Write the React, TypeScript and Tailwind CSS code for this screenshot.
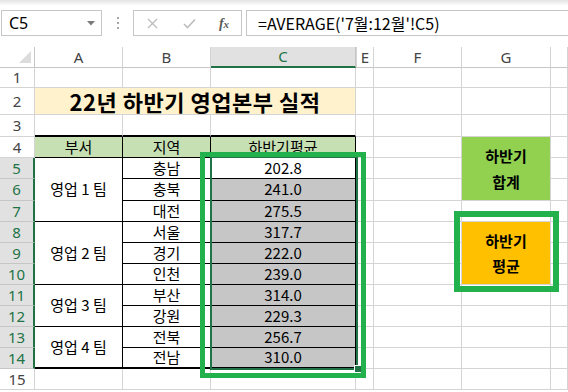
import React from 'react';

const KR = { fontFamily: '"Noto Sans CJK KR", "Noto Sans", sans-serif' };

// plain sheet cell with light gridlines
const Cell = ({ cls = '', children }: { cls?: string; children?: React.ReactNode }) => (
  <div className={`flex items-center justify-center border-r border-b border-[#d4d4d4] ${cls}`}>{children}</div>
);

// black-bordered table cell
const TCell = ({ cls = '', children }: { cls?: string; children?: React.ReactNode }) => (
  <div className={`flex items-center justify-center border-r border-b border-black text-[15px] text-black ${cls}`}>
    {children}
  </div>
);

const RowHead = ({ n, selected = false }: { n: number; selected?: boolean }) =>
  selected ? (
    <div className="flex items-center justify-center border-b border-b-[#c6c6c6] border-r-2 border-r-[#217346] bg-[#e1e1e1] text-[15px] text-[#217346] font-['Noto_Sans']">
      {n}
    </div>
  ) : (
    <div className="flex items-center justify-center border-b border-r border-[#d4d4d4] bg-white text-[15px] text-[#444] font-['Noto_Sans']">
      {n}
    </div>
  );

const Blank = ({ count }: { count: number }) => (
  <>
    {Array.from({ length: count }).map((_, i) => (
      <Cell key={i} />
    ))}
  </>
);

const regions: { name: string; value: string }[] = [
  { name: '충남', value: '202.8' },
  { name: '충북', value: '241.0' },
  { name: '대전', value: '275.5' },
  { name: '서울', value: '317.7' },
  { name: '경기', value: '222.0' },
  { name: '인천', value: '239.0' },
  { name: '부산', value: '314.0' },
  { name: '강원', value: '229.3' },
  { name: '전북', value: '256.7' },
  { name: '전남', value: '310.0' },
];

const FormulaBar = () => (
  <div className="relative h-[47px] bg-white">
    <div className="h-[6px] bg-gradient-to-b from-[#e4e4e4] to-white" />
    <div className="flex h-[26px] items-stretch pl-[1px] pt-[4px] box-content">
      <div className="flex w-[101px] items-center justify-between border border-[#c6c6c6] pl-[7px] pr-[6px]">
        <span className="text-[16px] text-black font-['Noto_Sans']">C5</span>
        <svg width="8" height="5" viewBox="0 0 8 5">
          <polygon points="0,0 8,0 4,4.5" fill="#7a7a7a" />
        </svg>
      </div>
      <div className="flex w-[31px] flex-col items-center justify-center gap-[3px]">
        <span className="h-[2px] w-[2px] bg-[#a6a6a6]" />
        <span className="h-[2px] w-[2px] bg-[#a6a6a6]" />
        <span className="h-[2px] w-[2px] bg-[#a6a6a6]" />
      </div>
      <div className="flex w-[109px] items-center border border-[#c6c6c6]">
        <div className="flex w-[37px] justify-center">
          <svg width="11" height="11" viewBox="0 0 11 11">
            <path d="M1 1 L10 10 M10 1 L1 10" stroke="#bdbdbd" strokeWidth="1.3" />
          </svg>
        </div>
        <div className="flex w-[36px] justify-center">
          <svg width="13" height="11" viewBox="0 0 13 11">
            <path d="M1 6 L4.5 9.5 L12 1.5" stroke="#bdbdbd" strokeWidth="1.6" fill="none" />
          </svg>
        </div>
        <div className="flex w-[34px] justify-center">
          <span className="text-[14px] font-bold italic text-[#595959] font-['Liberation_Serif']">
            f<span className="text-[11px]">x</span>
          </span>
        </div>
      </div>
      <div className="ml-[4px] flex flex-1 items-center border border-r-0 border-[#c6c6c6] pl-[11px]">
        <span className="text-[16px] text-black" style={KR}>
          =AVERAGE('7월:12월'!C5)
        </span>
      </div>
    </div>
  </div>
);

export default function App() {
  return (
    <div className="h-[392px] w-[568px] overflow-hidden bg-white" style={KR}>
      <FormulaBar />
      <div className="relative">
        <div className="grid grid-cols-[35px_88px_88px_145px_18px_88px_89px_1fr] grid-rows-[21px_20px_27px_22px_21px_21px_22px_21px_21px_21px_21px_21px_21px_21px_21px_21px_21px]">
          {/* column headers */}
          <div className="relative border-r border-b border-[#c6c6c6]">
            <svg className="absolute right-[3px] bottom-[4px]" width="12" height="12" viewBox="0 0 12 12">
              <polygon points="12,0 12,12 0,12" fill="#dcdcdc" />
            </svg>
          </div>
          {['A', 'B'].map((l) => (
            <div key={l} className="flex items-center justify-center border-r border-b border-r-[#d4d4d4] border-b-[#c6c6c6] text-[15px] text-[#444] font-['Noto_Sans']">
              {l}
            </div>
          ))}
          <div className="flex items-center justify-center border-r border-r-[#c6c6c6] border-b-2 border-b-[#217346] bg-[#e1e1e1] text-[15px] text-[#217346] font-['Noto_Sans']">
            C
          </div>
          <div className="flex items-center justify-center border-l border-r border-b border-l-[#d4d4d4] border-r-[#d4d4d4] border-b-[#c6c6c6] text-[15px] text-[#444] font-['Noto_Sans']">
            E
          </div>
          {['F', 'G', 'H'].map((l) => (
            <div key={l} className="flex items-center justify-center border-r border-b border-r-[#d4d4d4] border-b-[#c6c6c6] text-[15px] text-[#444] font-['Noto_Sans']">
              {l === 'H' ? '' : l}
            </div>
          ))}

          {/* row 1 */}
          <RowHead n={1} />
          <Blank count={7} />

          {/* row 2 - title */}
          <RowHead n={2} />
          <div className="col-span-3 flex items-center justify-center border-r border-b border-[#d4d4d4] bg-[#fff2cc] text-[22px] font-bold tracking-[0.5px] text-black">
            22년 하반기 영업본부 실적
          </div>
          <Blank count={4} />

          {/* row 3 */}
          <RowHead n={3} />
          <div className="border-r border-r-[#d4d4d4] border-b-2 border-b-black" />
          <div className="border-r border-r-[#d4d4d4] border-b-2 border-b-black" />
          <div className="border-r border-r-[#d4d4d4] border-b-2 border-b-black" />
          <Blank count={4} />

          {/* row 4 - table header */}
          <RowHead n={4} />
          <TCell cls="bg-[#c6e0b4]">부서</TCell>
          <TCell cls="bg-[#c6e0b4]">지역</TCell>
          <TCell cls="bg-[#c6e0b4]">하반기평균</TCell>
          <Blank count={2} />
          <div className="row-span-3 flex flex-col items-center justify-center border-b border-r border-[#d4d4d4] bg-[#92d050] text-[15px] font-bold leading-[26px] text-black">
            <span>하반기</span>
            <span>합계</span>
          </div>
          <Cell />

          {regions.map((r, i) => {
            const row = i + 5;
            const last = row === 14;
            return (
              <React.Fragment key={row}>
                <RowHead n={row} selected />
                {row === 5 && <TCell cls="row-span-3">영업 1 팀</TCell>}
                {row === 8 && <TCell cls="row-span-3">영업 2 팀</TCell>}
                {row === 11 && <TCell cls="row-span-2">영업 3 팀</TCell>}
                {row === 13 && <TCell cls="row-span-2 border-b-2">영업 4 팀</TCell>}
                <TCell cls={last ? 'border-b-2' : ''}>{r.name}</TCell>
                <TCell cls={`${last ? 'border-b-2' : ''} ${row === 5 ? 'bg-white' : 'bg-[#c6c6c6]'}`}>{r.value}</TCell>
                <Cell />
                <Cell />
                {row === 8 && (
                  <div className="row-span-3 flex flex-col items-center justify-center border-b border-r border-[#d4d4d4] bg-[#ffc000] text-[15px] font-bold leading-[25px] text-black">
                    <span>하반기</span>
                    <span>평균</span>
                  </div>
                )}
                {(row === 7 || row > 10) && <Cell />}
                <Cell />
              </React.Fragment>
            );
          })}

          {/* row 15 */}
          <RowHead n={15} />
          <Blank count={7} />
        </div>

        {/* selection range C5:C14 */}
        <div className="pointer-events-none absolute left-[210px] top-[109px] h-[214px] w-[148px] border-2 border-[#217346]" />
        <div className="pointer-events-none absolute left-[354px] top-[318px] h-[8px] w-[8px] border border-white bg-[#217346]" />

        {/* annotation boxes */}
        <div className="pointer-events-none absolute left-[200px] top-[105px] h-[226px] w-[166px] border-[5px] border-[#22b14c]" />
        <div className="pointer-events-none absolute left-[454px] top-[164px] h-[81px] w-[105px] border-[6px] border-[#22b14c]" />
      </div>
    </div>
  );
}
